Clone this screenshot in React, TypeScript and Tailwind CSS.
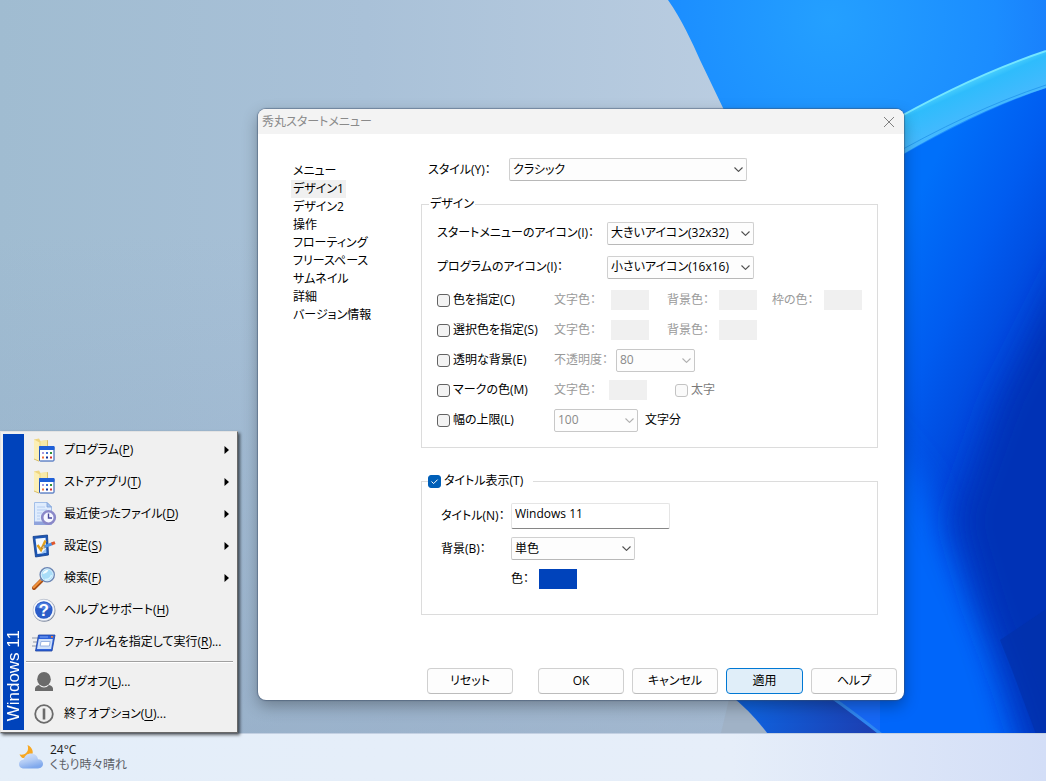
import { useState } from "react";
import type { ReactNode } from "react";

interface IMenuItem {
  label: string;
  accessKey: string;
  suffix?: string;
  hasSubmenu?: boolean;
  icon: ReactNode;
}

const pages = [
  "メニュー",
  "デザイン1",
  "デザイン2",
  "操作",
  "フローティング",
  "フリースペース",
  "サムネイル",
  "詳細",
  "バージョン情報",
];

function FolderIcon() {
  return (
    <svg width={32} height={32} viewBox="0 0 32 32" aria-hidden="true">
      <path d="M6 5.5 L11 4.5 L12.5 7 L19.5 6.2 V24 L11 27.2 L6 25 Z" fill="#efd680" />
      <path d="M12.5 7 L19.5 6.2 V14 H12.5 Z" fill="#f8e9a8" />
      <path d="M6 5.5 L11.5 8.5 V27.2 L6 25 Z" fill="#fbefb6" />
      <path d="M19.5 6.2 V13 M6 25 L11 27.2" fill="none" stroke="#cfae4c" strokeWidth={0.7} />
      <rect x={11.5} y={12.5} width={14.5} height={14.5} rx={0.8} fill="#fff" stroke="#1d4fb0" />
      <rect x={11} y={12} width={15.5} height={4} rx={0.8} fill="#1f5fd8" />
      <rect x={14} y={18} width={2} height={2} fill="#a99adf" />
      <rect x={18} y={18} width={2} height={2} fill="#3f6fd0" />
      <rect x={22} y={18} width={2} height={2} fill="#2f8f3a" />
      <rect x={14} y={22.5} width={2} height={2} fill="#f0703a" />
      <rect x={18} y={22.5} width={2} height={2} fill="#12309a" />
      <rect x={22} y={22.5} width={2} height={2} fill="#d03030" />
    </svg>
  );
}

function RecentIcon() {
  return (
    <svg width={32} height={32} viewBox="0 0 32 32" aria-hidden="true">
      <path d="M6.5 4.5 H19 L23.5 9 V26.5 H6.5 Z" fill="#dfecfd" stroke="#a3bfe8" />
      <path d="M19 4.5 V9 H23.5 Z" fill="#a9c8f2" stroke="#7f9fd6" strokeWidth={0.8} />
      <path d="M9 9 H17 M9 12 H19 M9 15 H14 M9 18 H12 M9 21 H12" stroke="#b4cdf1" />
      <path d="M6 23.5 H22 V27 H6 Z" fill="#8fa3dc" />
      <circle cx={20.5} cy={19.5} r={6.3} fill="#f6f7ff" stroke="#8a88c8" strokeWidth={2.6} />
      <path d="M20.5 15.5 V20 H24" fill="none" stroke="#4a4a9c" strokeWidth={1.4} />
    </svg>
  );
}

function SettingsIcon() {
  return (
    <svg width={32} height={32} viewBox="0 0 32 32" aria-hidden="true">
      <path d="M5 6.5 L19.5 5 L20.5 25 L7.5 27 Z" fill="#1c56b4" stroke="#123e8c" strokeWidth={0.8} />
      <path d="M7.5 8.8 L17.6 7.8 L18.2 22.8 L9.4 24 Z" fill="#f3f9ff" />
      <path d="M13 23.5 L18.2 18 L18.2 22.8 Z" fill="#9ac4f4" />
      <path d="M9.5 15 L13 20 L17.5 10.5" fill="none" stroke="#e2a01c" strokeWidth={2.4} />
      <path d="M16 16.8 L24.5 13.6" stroke="#4c93e6" strokeWidth={3} />
      <path d="M23.6 13.9 L27 12.6" stroke="#e0562c" strokeWidth={3} />
      <path d="M13.2 18 L16.2 15.4 L17 18 Z" fill="#f5d9a0" stroke="#775530" strokeWidth={0.4} />
    </svg>
  );
}

function SearchIcon() {
  return (
    <svg width={32} height={32} viewBox="0 0 32 32" aria-hidden="true">
      <path d="M13.5 18.5 L6 26" stroke="#a84c12" strokeWidth={4} strokeLinecap="round" />
      <path d="M13 18.2 L5.8 25.3" stroke="#f0923c" strokeWidth={2.2} strokeLinecap="round" />
      <path d="M14.5 16.5 L12.8 18.2" stroke="#8a93a3" strokeWidth={3} />
      <circle cx={19.2} cy={12.8} r={7} fill="#a9ddf8" stroke="#6c86b4" strokeWidth={1.6} />
      <circle cx={19.2} cy={12.8} r={6} fill="none" stroke="#e8f6ff" strokeWidth={0.8} />
      <path d="M14.5 12 Q16 7.8 20.5 7.8 Q19 11.5 14.5 12 Z" fill="#f4fcff" />
      <path d="M17 17.5 Q22 17.8 23.6 13" fill="none" stroke="#d4f2ff" strokeWidth={1.6} />
    </svg>
  );
}

function HelpIcon() {
  return (
    <svg width={32} height={32} viewBox="0 0 32 32" aria-hidden="true">
      <circle cx={16.2} cy={16.5} r={11.2} fill="#7b869c" />
      <circle cx={15.8} cy={16} r={10.8} fill="#f7f9fd" stroke="#b4bccb" strokeWidth={0.6} />
      <circle cx={15.8} cy={16} r={8.8} fill="#2a5cc8" />
      <path d="M8.5 13.5 A7.8 7.8 0 0 1 23 13.5 Q16 17 8.5 13.5 Z" fill="#4d7cdd" />
      <text
        x={15.8}
        y={22}
        textAnchor="middle"
        fill="#fff"
        className="font-['Liberation_Sans',sans-serif] text-[17px] font-bold"
      >
        ?
      </text>
    </svg>
  );
}

function RunIcon() {
  return (
    <svg width={32} height={32} viewBox="0 0 32 32" aria-hidden="true">
      <path d="M4 12 H10 M5 16 H9 M4 20 H8" stroke="#8d97a8" />
      <path d="M10.5 9 H27 L24 25 H7.5 Z" fill="#2e62da" stroke="#1b3f9e" strokeWidth={0.8} />
      <path d="M10.8 13 H24.8 L23.1 23 H9 Z" fill="#cfe0fa" />
      <path d="M13 15.5 H22.2 L21.4 20 H12.2 Z" fill="#fff" stroke="#8fabdf" strokeWidth={0.9} />
      <rect x={23} y={10} width={2} height={1.6} fill="#f0803c" />
      <path d="M12 11 H20" stroke="#7fa6f5" />
    </svg>
  );
}

function LogoffIcon() {
  return (
    <svg width={32} height={32} viewBox="0 0 32 32" aria-hidden="true" fill="#6b6b6b">
      <ellipse cx={16} cy={13.2} rx={6.8} ry={7.2} />
      <path d="M7 25 V22.5 Q7.5 19.5 11 19 Q13 21.5 16 21.5 Q19 21.5 21 19 Q24.5 19.5 25 22.5 V25 Z" />
    </svg>
  );
}

function PowerIcon() {
  return (
    <svg width={32} height={32} viewBox="0 0 32 32" aria-hidden="true" fill="none" stroke="#6b6b6b">
      <circle cx={16} cy={16} r={8.8} strokeWidth={1.8} />
      <path d="M16 10.5 V21.5" strokeWidth={2.6} />
    </svg>
  );
}

function WeatherIcon() {
  return (
    <svg width={26} height={26} viewBox="0 0 26 26" aria-hidden="true">
      <defs>
        <linearGradient id="cloud" x1="0" y1="0" x2="0.4" y2="1">
          <stop offset="0" stopColor="#dbe7fb" />
          <stop offset="0.55" stopColor="#b3ccf5" />
          <stop offset="1" stopColor="#7fa8ec" />
        </linearGradient>
      </defs>
      <path d="M9.5 1 C15 3.5 17 10 11.5 14 H4.5 C3 13 2 11.5 1.5 10.5 C8 11.5 11.5 7 9.5 1 Z" fill="#f7a823" />
      <path
        d="M6 24.5 C2.5 24.5 1 22.3 1 20 C1 17.5 3 15.8 5.5 15.8 C6.5 11.5 9.5 9.5 13 9.5 C17 9.5 19.5 12 20 15.3 C23 15.2 25 17.3 25 19.8 C25 22.5 23 24.5 20 24.5 Z"
        fill="url(#cloud)"
      />
    </svg>
  );
}

const menuItems: IMenuItem[] = [
  { label: "プログラム", accessKey: "P", hasSubmenu: true, icon: <FolderIcon /> },
  { label: "ストアアプリ", accessKey: "T", hasSubmenu: true, icon: <FolderIcon /> },
  { label: "最近使ったファイル", accessKey: "D", hasSubmenu: true, icon: <RecentIcon /> },
  { label: "設定", accessKey: "S", hasSubmenu: true, icon: <SettingsIcon /> },
  { label: "検索", accessKey: "F", hasSubmenu: true, icon: <SearchIcon /> },
  { label: "ヘルプとサポート", accessKey: "H", icon: <HelpIcon /> },
  { label: "ファイル名を指定して実行", accessKey: "R", suffix: "...", icon: <RunIcon /> },
];

const powerItems: IMenuItem[] = [
  { label: "ログオフ", accessKey: "L", suffix: "...", icon: <LogoffIcon /> },
  { label: "終了オプション", accessKey: "U", suffix: "...", icon: <PowerIcon /> },
];

function Wallpaper() {
  return (
    <svg
      className="absolute inset-0 w-full h-full"
      viewBox="0 0 1046 781"
      preserveAspectRatio="xMidYMid slice"
      aria-hidden="true"
    >
      <defs>
        <linearGradient id="sky" x1="0" y1="0" x2="1" y2="0">
          <stop offset="0" stopColor="#a0bcd1" />
          <stop offset="0.35" stopColor="#a9c1d8" />
          <stop offset="0.7" stopColor="#bacde1" />
        </linearGradient>
        <linearGradient id="skyShade" x1="0" y1="0" x2="0" y2="1">
          <stop offset="0.3" stopColor="#8fa8c8" stopOpacity="0" />
          <stop offset="1" stopColor="#8fa6c0" stopOpacity="0.6" />
        </linearGradient>
        <radialGradient id="petal" gradientUnits="userSpaceOnUse" cx="830" cy="20" r="330">
          <stop offset="0" stopColor="#24a0ff" />
          <stop offset="0.5" stopColor="#1b8dff" />
          <stop offset="1" stopColor="#1668f5" />
        </radialGradient>
        <linearGradient id="rim" gradientUnits="userSpaceOnUse" x1="960" y1="80" x2="980" y2="125">
          <stop offset="0" stopColor="#5cdcff" />
          <stop offset="0.25" stopColor="#2fbcfc" />
          <stop offset="1" stopColor="#4cb8ff" />
        </linearGradient>
        <linearGradient id="inner" gradientUnits="userSpaceOnUse" x1="900" y1="230" x2="1060" y2="310">
          <stop offset="0" stopColor="#0070fa" />
          <stop offset="0.45" stopColor="#005cf0" />
          <stop offset="1" stopColor="#0040d4" />
        </linearGradient>
        <linearGradient id="lower" gradientUnits="userSpaceOnUse" x1="750" y1="700" x2="870" y2="735">
          <stop offset="0" stopColor="#0f62de" />
          <stop offset="1" stopColor="#1c3fb2" />
        </linearGradient>
        <clipPath id="bloom">
          <path d="M1046 88 Q975 112 880 168 V734 L800 670 V781 H1046 Z" />
        </clipPath>
        <filter id="soft" x="-40%" y="-40%" width="180%" height="180%">
          <feGaussianBlur stdDeviation="16" />
        </filter>
      </defs>
      <rect width="1046" height="781" fill="url(#sky)" />
      <rect width="1046" height="781" fill="url(#skyShade)" />
      <path d="M668 0 C682 20 692 42 700 60 L724 110 L800 300 L730 695 L765 745 L765 781 H1046 V0 Z" fill="url(#petal)" />
      <path d="M1046 88 Q975 112 880 168 V781 H1046 Z" fill="url(#inner)" />
      <g clipPath="url(#bloom)">
        <path d="M870 420 L920 480 L990 640 L1030 790 H840 V420 Z" fill="#0066fa" filter="url(#soft)" />
        <path d="M1080 240 L1000 400 L958 520 L985 610 L1015 690 L1050 800 H1120 Z" fill="#0233b6" filter="url(#soft)" />
        <path d="M1000 640 L1012 670 L1036 734 V781 H1060 V600 Z" fill="#0230a8" fillOpacity="0.6" />
      </g>
      <path d="M730 695 Q752 712 773 740 V781 H886 V737 Q858 716 830 696 Z" fill="url(#lower)" />
      <path d="M730 695 Q752 712 770 737 H720 Z" fill="#a0b2c6" />
      <path d="M830 696 Q858 716 882 735" fill="none" stroke="#2f86f0" strokeWidth="3" />
      <path d="M1046 51 Q970 76 880 128 V168 Q970 112 1046 88 Z" fill="url(#rim)" />
      <path d="M1046 51 Q970 76 880 128" fill="none" stroke="#74e6ff" strokeWidth="2" />
      <path d="M1046 85 Q970 110 880 162" fill="none" stroke="#279cf0" strokeWidth="1" />
    </svg>
  );
}

function StartMenuRow({ label, accessKey, suffix, hasSubmenu, icon }: IMenuItem) {
  return (
    <button className="flex items-center w-full h-8 pl-1 text-left whitespace-nowrap">
      {icon}
      <span className="flex-1 pl-1">
        {label}(<span className="underline underline-offset-2">{accessKey}</span>){suffix}
      </span>
      {hasSubmenu && (
        <svg width={5} height={8} viewBox="0 0 5 8" className="mr-[6px]" aria-hidden="true">
          <path d="M0.5 0 L5 4 L0.5 8 Z" fill="#000" />
        </svg>
      )}
    </button>
  );
}

function StartMenu() {
  return (
    <nav className="absolute left-0 bottom-0 z-10 w-[238px] flex p-[2px] bg-[#f0f0f0] border border-[#e3e3e3] border-r-[#696969] border-b-[#696969] shadow-[2px_2px_3px_rgba(0,0,0,0.6)]">
      <div className="w-[21px] bg-[#0043bb] text-white flex items-end justify-center pb-[9px]">
        <span className="[writing-mode:vertical-rl] rotate-180 leading-5 text-[17px] font-['Liberation_Sans',sans-serif]">
          Windows 11
        </span>
      </div>
      <div className="flex-1">
        {menuItems.map((item) => (
          <StartMenuRow key={item.label} {...item} />
        ))}
        <div className="h-2 pt-[3px] px-[2px]">
          <div className="border-t border-[#a0a0a0] border-b border-b-white" />
        </div>
        {powerItems.map((item) => (
          <StartMenuRow key={item.label} {...item} />
        ))}
      </div>
    </nav>
  );
}

interface IDropdown {
  id?: string;
  label?: string;
  value: string;
  className: string;
  disabled?: boolean;
}

function Dropdown({ id, label, value, className, disabled }: IDropdown) {
  return (
    <div className={`relative ${className}`}>
      <select
        id={id}
        aria-label={label}
        disabled={disabled}
        className="appearance-none block w-full h-[23px] pl-[3px] pr-5 bg-[#fdfdfd] border border-[#d0d0d0] border-b-[#b8b8b8] rounded-xs opacity-100 disabled:text-[#8a8a8a] disabled:border-[#c8c8c8]"
      >
        <option>{value}</option>
      </select>
      <svg
        width={9}
        height={5}
        viewBox="0 0 9 5"
        className={`absolute right-1 top-[9px] pointer-events-none ${disabled ? "stroke-[#b0b0b0]" : "stroke-[#505050]"}`}
        fill="none"
        aria-hidden="true"
      >
        <path d="M0.5 0.5 L4.5 4.4 L8.5 0.5" strokeWidth={1.1} />
      </svg>
    </div>
  );
}

interface ICheck {
  label: string;
  className?: string;
  disabled?: boolean;
  defaultChecked?: boolean;
}

function Check({ label, className, disabled, defaultChecked }: ICheck) {
  return (
    <label className={`flex items-center gap-[3px] whitespace-nowrap ${disabled ? "text-[#7a7a7a]" : ""} ${className ?? ""}`}>
      <span className="relative block size-[13px]">
        <input
          type="checkbox"
          disabled={disabled}
          defaultChecked={defaultChecked}
          className="peer appearance-none block size-[13px] rounded-[3px] border border-[#626262] bg-[#f3f3f3] checked:bg-[#005fb8] checked:border-[#005fb8] disabled:border-[#c3c3c3] disabled:bg-[#fafafa]"
        />
        <svg
          viewBox="0 0 13 13"
          className="absolute inset-0 size-[13px] hidden peer-checked:block pointer-events-none"
          fill="none"
          stroke="#fff"
          aria-hidden="true"
        >
          <path d="M3.5 6.5 L5.6 8.6 L9.6 4.6" />
        </svg>
      </span>
      {label}
    </label>
  );
}

function Swatch({ label, className }: { label: string; className: string }) {
  return <button aria-label={label} className={`w-[38px] h-5 ${className}`} />;
}

const dim = "text-[#9a9a9a]";
const pushButton =
  "h-[26px] rounded-sm border border-[#d0d0d0] border-b-[#bcbcbc] bg-[#fdfdfd] text-center";

function SettingsDialog() {
  const [page, setPage] = useState("デザイン1");

  return (
    <section className="absolute left-[258px] top-[109px] w-[646px] bg-white rounded-lg overflow-hidden shadow-[0_0_1px_1px_rgba(60,80,110,0.5),0_6px_16px_rgba(0,0,0,0.3)]">
      <header className="flex items-center justify-between h-[25px] pl-1 pr-[9px] bg-[#f3f3f3]">
        <h1 className="text-[#8a8a8a]">秀丸スタートメニュー</h1>
        <button aria-label="閉じる">
          <svg width={12} height={12} viewBox="0 0 12 12" stroke="#808080" aria-hidden="true">
            <path d="M1 1 L11 11 M11 1 L1 11" />
          </svg>
        </button>
      </header>
      <div className="flex">
        <ul className="w-[163px] pl-[33px] pt-7">
          {pages.map((name) => (
            <li key={name}>
              <button
                onClick={() => setPage(name)}
                className={`block h-[18px] px-[2px] whitespace-nowrap ${name === page ? "bg-[#f0f0f0]" : ""}`}
              >
                {name}
              </button>
            </li>
          ))}
        </ul>
        <div className="flex-1 pt-6 pr-[26px]">
          <div className="flex items-center pl-[7px] mb-[14px]">
            <label htmlFor="style" className="w-[81px]">
              スタイル(Y)：
            </label>
            <Dropdown id="style" value="クラシック" className="w-[238px]" />
          </div>

          <fieldset className="border border-[#dcdcdc] pl-[15px] pb-3">
            <legend className="-ml-2 px-px h-[18px]">デザイン</legend>
            <div className="flex items-center h-[34px] mt-[3px]">
              <label htmlFor="menu-icon" className="w-[170px] whitespace-nowrap">
                スタートメニューのアイコン(I)：
              </label>
              <Dropdown id="menu-icon" value="大きいアイコン(32x32)" className="w-[147px]" />
            </div>
            <div className="flex items-center h-[34px]">
              <label htmlFor="program-icon" className="w-[170px] whitespace-nowrap">
                プログラムのアイコン(I)：
              </label>
              <Dropdown id="program-icon" value="小さいアイコン(16x16)" className="w-[147px]" />
            </div>
            <div className="flex items-center h-[30px] mt-px">
              <Check label="色を指定(C)" className="w-[117px]" />
              <span className={`w-[57px] ${dim}`}>文字色：</span>
              <Swatch label="文字色" className="bg-[#f0f0f0]" />
              <span className={`w-[52px] ml-[18px] ${dim}`}>背景色：</span>
              <Swatch label="背景色" className="bg-[#f0f0f0]" />
              <span className={`w-[52px] ml-[15px] ${dim}`}>枠の色：</span>
              <Swatch label="枠の色" className="bg-[#f0f0f0]" />
            </div>
            <div className="flex items-center h-[30px]">
              <Check label="選択色を指定(S)" className="w-[117px]" />
              <span className={`w-[57px] ${dim}`}>文字色：</span>
              <Swatch label="選択文字色" className="bg-[#f0f0f0]" />
              <span className={`w-[52px] ml-[18px] ${dim}`}>背景色：</span>
              <Swatch label="選択背景色" className="bg-[#f0f0f0]" />
            </div>
            <div className="flex items-center h-[30px]">
              <Check label="透明な背景(E)" className="w-[117px]" />
              <label htmlFor="opacity" className={`w-[62px] ${dim}`}>
                不透明度：
              </label>
              <Dropdown id="opacity" value="80" className="w-[79px]" disabled />
            </div>
            <div className="flex items-center h-[30px]">
              <Check label="マークの色(M)" className="w-[117px]" />
              <span className={`w-[55px] ${dim}`}>文字色：</span>
              <Swatch label="マークの文字色" className="bg-[#f0f0f0]" />
              <Check label="太字" className="ml-7" disabled />
            </div>
            <div className="flex items-center h-[30px]">
              <Check label="幅の上限(L)" className="w-[117px]" />
              <Dropdown label="幅の上限" value="100" className="w-[84px]" disabled />
              <span className="ml-[7px]">文字分</span>
            </div>
          </fieldset>

          <fieldset className="mt-6 border border-[#dcdcdc] pl-[19px] pb-[22px]">
            <legend className="-ml-[13px] pr-[10px] h-[18px]">
              <Check label="タイトル表示(T)" defaultChecked className="h-[18px]" />
            </legend>
            <div className="flex items-center h-[33px] mt-[9px]">
              <label htmlFor="title" className="w-[70px] whitespace-nowrap">
                タイトル(N)：
              </label>
              <input
                id="title"
                type="text"
                defaultValue="Windows 11"
                className="w-[159px] h-[26px] px-[3px] pb-1 border border-[#e5e5e5] border-b-[#868686] rounded-xs"
              />
            </div>
            <div className="flex items-center h-[33px]">
              <label htmlFor="background" className="w-[70px]">
                背景(B)：
              </label>
              <Dropdown id="background" value="単色" className="w-[124px]" />
            </div>
            <div className="flex items-center h-[27px] pl-[70px]">
              <span className="w-7">色：</span>
              <Swatch label="背景の色" className="bg-[#0043bb]" />
            </div>
          </fieldset>
        </div>
      </div>
      <footer className="flex justify-end gap-2 pt-[53px] pr-[7px] pb-[6px]">
        <button className={`w-[86px] mr-[17px] ${pushButton}`}>リセット</button>
        <button className={`w-[86px] ${pushButton}`}>OK</button>
        <button className={`w-[86px] ${pushButton}`}>キャンセル</button>
        <button className="w-[77px] h-[26px] rounded-sm border border-[#0078d4] bg-[#e0eef9] text-center">
          適用
        </button>
        <button className={`w-[86px] ${pushButton}`}>ヘルプ</button>
      </footer>
    </section>
  );
}

function Taskbar() {
  return (
    <footer className="relative h-12 flex items-center pl-[18px] pb-[2px] gap-[6px] border-t border-[#c3d0e2] bg-linear-to-r from-[#e4eef9] via-[#e6eef9] via-70% to-[#d3def7]">
      <WeatherIcon />
      <div className="leading-[15px]">
        <p className="text-[#1a1a1a]">24°C</p>
        <p className="text-[#5c6066]">くもり時々晴れ</p>
      </div>
    </footer>
  );
}

export default function App() {
  return (
    <div className="relative min-h-screen flex flex-col overflow-hidden bg-[#a5bdd4] text-black text-xs leading-[18px] font-['Open_Sans','Noto_Sans_CJK_JP',sans-serif] [font-feature-settings:'palt']">
      <Wallpaper />
      <main className="relative flex-1">
        <SettingsDialog />
        <StartMenu />
      </main>
      <Taskbar />
    </div>
  );
}
